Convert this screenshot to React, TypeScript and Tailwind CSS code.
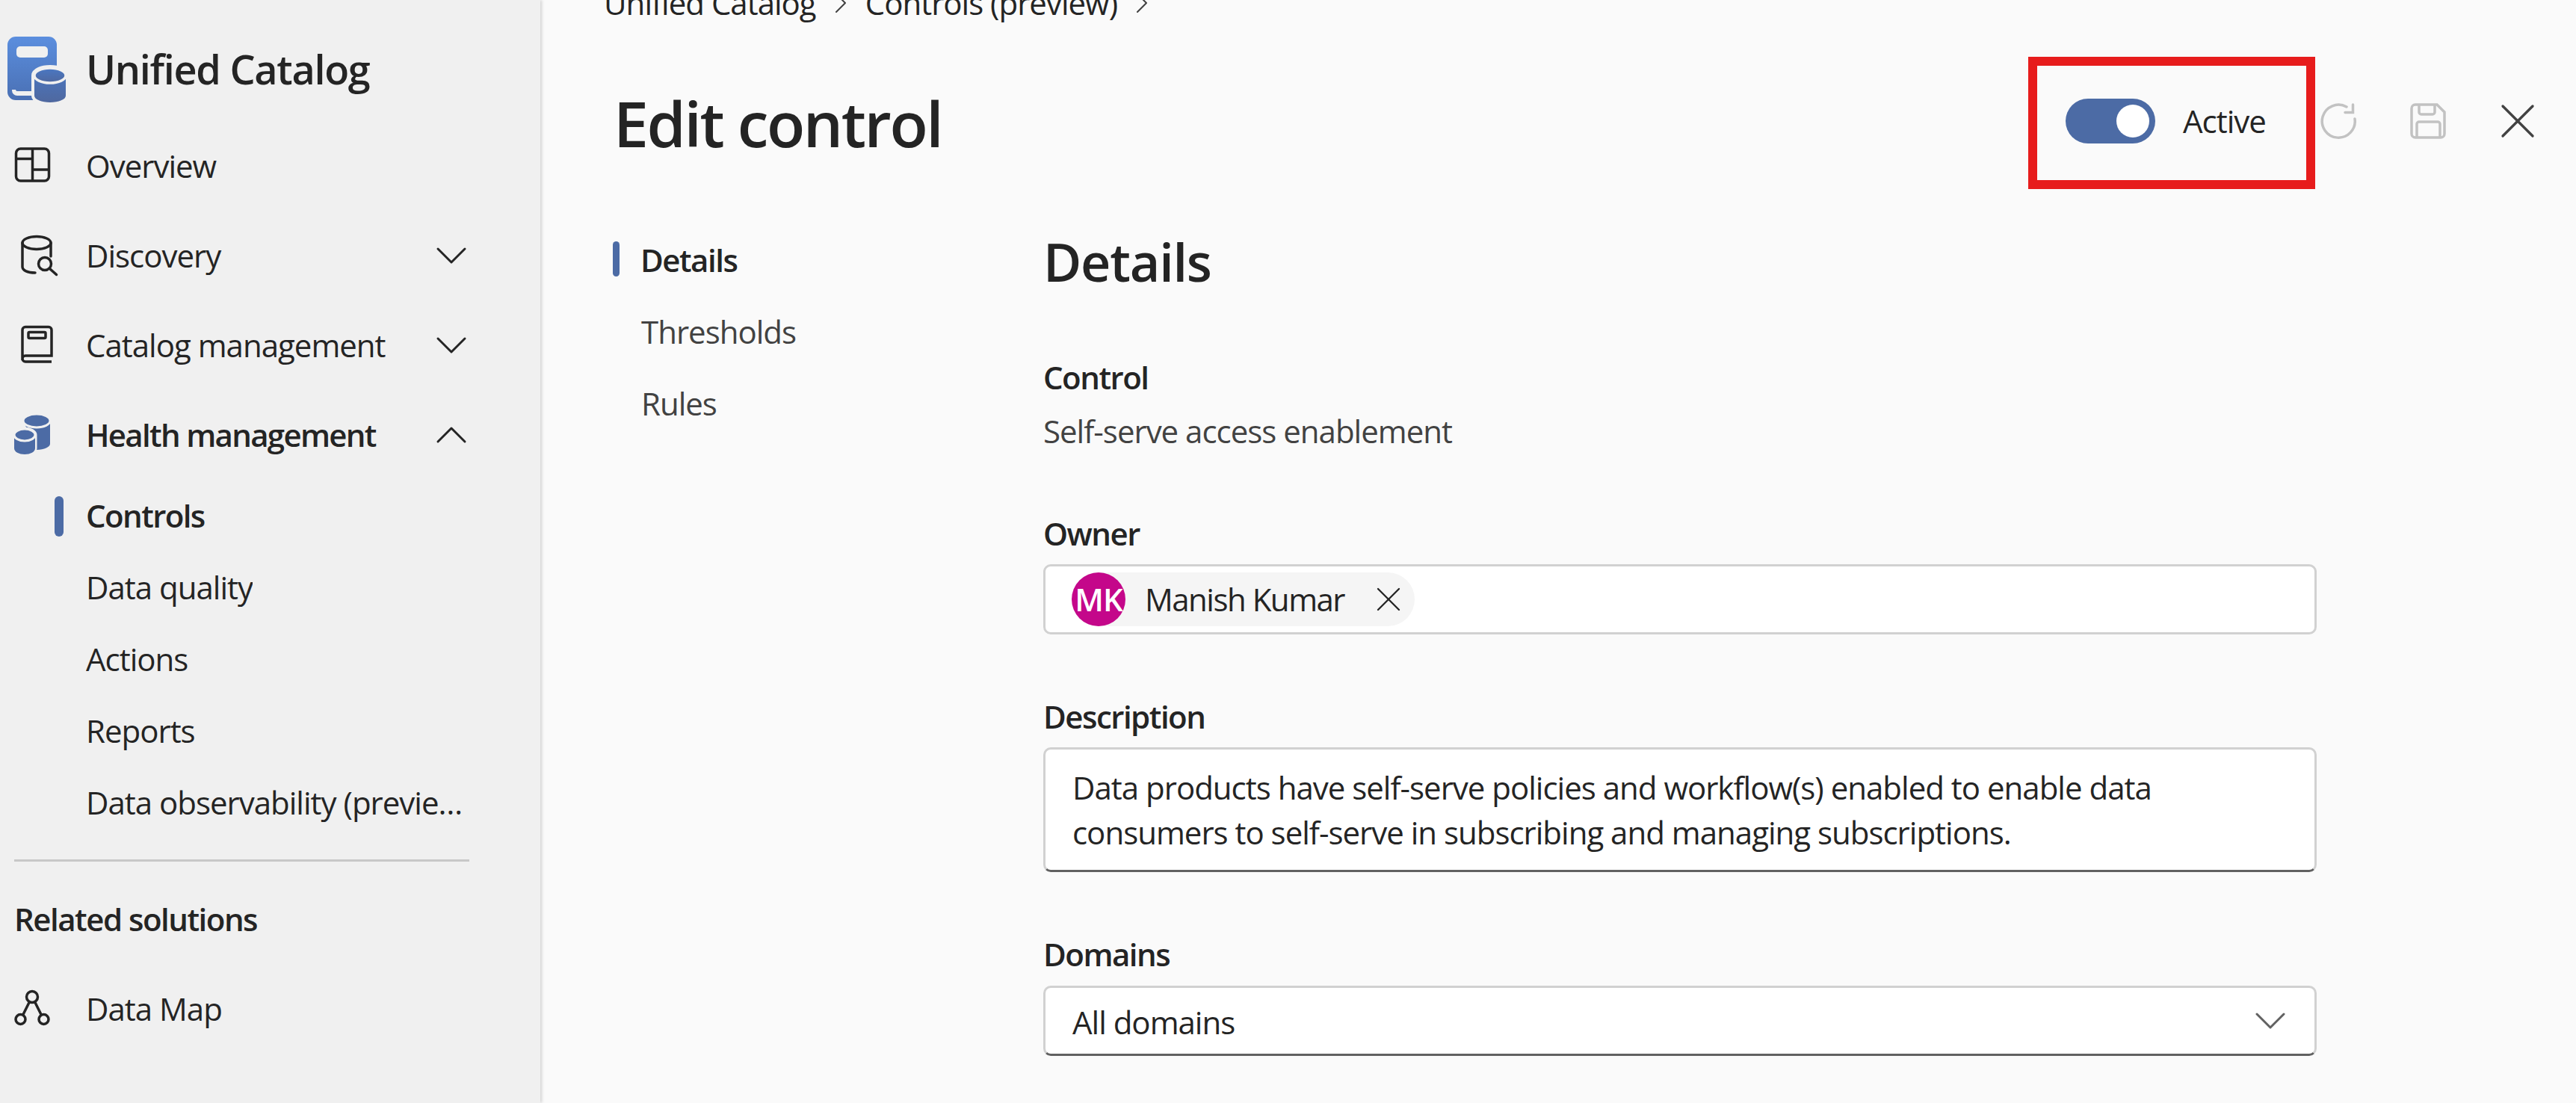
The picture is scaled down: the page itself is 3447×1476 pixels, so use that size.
import { ChevronDown, ChevronUp, ChevronRight, X } from "lucide-react";
import type { ReactNode } from "react";

const FONT = "font-['Open_Sans','Noto_Sans',sans-serif]";

function OverviewIcon() {
  return (
    <svg width="60" height="60" viewBox="0 0 60 60" fill="none" stroke="#242424" strokeWidth="3.5">
      <rect x="2.5" y="7" width="44" height="43" rx="6" />
      <path d="M24.5 7v43M2.5 20.5h22M24.5 35h22" />
    </svg>
  );
}

function DiscoveryIcon() {
  return (
    <svg width="60" height="60" viewBox="0 0 60 60" fill="none" stroke="#242424" strokeWidth="3.5" strokeLinecap="round">
      <ellipse cx="30" cy="13" rx="19" ry="8.5" />
      <path d="M11 13v32c0 5 7 8 17 8M49 13v18" />
      <circle cx="41" cy="41" r="8.5" />
      <path d="M47.5 47.5l9 8" />
    </svg>
  );
}

function CatalogIcon() {
  return (
    <svg width="60" height="60" viewBox="0 0 60 60" fill="none" stroke="#242424" strokeWidth="3.5">
      <path d="M11 50V9.5a4 4 0 0 1 4-4h31a4 4 0 0 1 4 4V44H15a4 4 0 0 0-4 4a4 4 0 0 0 4 4h35" />
      <rect x="19" y="12.5" width="23" height="8" rx="1.5" />
    </svg>
  );
}

function HealthIcon() {
  return (
    <svg width="60" height="60" viewBox="0 0 60 60" fill="#4c6ba5">
      {/* big can */}
      <path d="M12 11h36v31c0 4-8 8-18 8z" />
      <ellipse cx="30" cy="11" rx="18" ry="9" stroke="#f0f0f0" strokeWidth="3" />
      {/* small can */}
      <path d="M0 30a14 8 0 0 1 28 0v18a14 8 0 0 1-28 0z" stroke="#f0f0f0" strokeWidth="5" paintOrder="stroke" />
      <ellipse cx="14" cy="30" rx="14" ry="8" stroke="#f0f0f0" strokeWidth="3" />
    </svg>
  );
}

function DataMapIcon() {
  return (
    <svg width="60" height="60" viewBox="0 0 60 60" fill="none" stroke="#242424" strokeWidth="3.5">
      <circle cx="24" cy="14" r="7.500" />
      <circle cx="8.500" cy="44" r="6.500" />
      <circle cx="39.500" cy="44" r="6.500" />
      <path d="M20.500 20.500L11.500 38.500M27.500 20.500L36.500 38.500" />
    </svg>
  );
}

function Logo() {
  return (
    <svg width="90" height="90" viewBox="0 0 90 90">
      <defs>
        <linearGradient id="book" x1="0" y1="0" x2="0" y2="1">
          <stop offset="0" stopColor="#5b8ede" />
          <stop offset="1" stopColor="#4a70b4" />
        </linearGradient>
        <linearGradient id="can" x1="0" y1="0" x2="0" y2="1">
          <stop offset="0" stopColor="#4a78c4" />
          <stop offset="1" stopColor="#4f689f" />
        </linearGradient>
      </defs>
      <rect x="1" y="1" width="66" height="85" rx="11" fill="url(#book)" />
      <rect x="13" y="14" width="42" height="15" rx="5" fill="#f0f0f0" />
      <path d="M7 72v1a7 7 0 0 0 7 7h24v-6H14a2 2 0 0 1-2-2z" fill="#f0f0f0" />
      <path d="M37 53a21 10 0 0 1 42 0v27a21 9 0 0 1-42 0z" fill="url(#can)" stroke="#f0f0f0" strokeWidth="8" paintOrder="stroke" />
      <ellipse cx="58" cy="53" rx="21" ry="10" fill="url(#can)" stroke="#f0f0f0" strokeWidth="3.500" />
    </svg>
  );
}

function NavRow({ icon, label, bold, open }: { icon: ReactNode; label: string; bold?: boolean; open?: boolean }) {
  return (
    <div className="flex h-[120px] items-center">
      <div className="w-[115px] shrink-0 pl-[19px]">{icon}</div>
      <span className={`flex-1 ${bold ? "font-semibold tracking-[-1.7px]" : ""}`}>{label}</span>
      {open === false && <ChevronDown size={72} strokeWidth={1} className="mr-[83px]" />}
      {open === true && <ChevronUp size={72} strokeWidth={1} className="mr-[83px]" />}
    </div>
  );
}

function SubRow({ label, active }: { label: string; active?: boolean }) {
  return (
    <div className="relative flex h-[96px] items-center pl-[115px] pr-[100px]">
      {active && <span className="absolute left-[73px] top-[22px] h-[54px] w-[12px] rounded-full bg-[#4c6ba5]" />}
      <span className={`truncate ${active ? "font-semibold tracking-[-1.6px]" : ""}`}>{label}</span>
    </div>
  );
}

function Sidebar() {
  return (
    <aside className="relative z-10 h-full w-[723px] shrink-0 bg-[#f0f0f0] text-[#242424] shadow-[2px_0_4px_rgba(0,0,0,0.16)]">
      <div className="mt-[24px] flex h-[138px] items-center">
        <div className="w-[115px] shrink-0 pl-[9px]">
          <Logo />
        </div>
        <span className="-mt-[3px] text-[54px] font-semibold tracking-[-1.3px]">Unified Catalog</span>
      </div>
      <NavRow icon={<OverviewIcon />} label="Overview" />
      <NavRow icon={<DiscoveryIcon />} label="Discovery" open={false} />
      <NavRow icon={<CatalogIcon />} label="Catalog management" open={false} />
      <NavRow icon={<HealthIcon />} label="Health management" bold open />
      <SubRow label="Controls" active />
      <SubRow label="Data quality" />
      <SubRow label="Actions" />
      <SubRow label="Reports" />
      <SubRow label="Data observability (preview)" />
      <div className="ml-[19px] mt-[28px] h-[3px] w-[609px] bg-[#c8c8c8]" />
      <div className="mt-[17px] flex h-[120px] items-center pl-[19px] font-semibold tracking-[-1.5px]">Related solutions</div>
      <NavRow icon={<DataMapIcon />} label="Data Map" />
    </aside>
  );
}

function Toolbar() {
  return (
    <div className="flex items-center">
      <div className="flex h-[177px] w-[384px] items-center border-[12px] border-[#e71c1c] pb-[6px] pl-[38px]">
        <div className="flex h-[60px] w-[120px] items-center justify-end rounded-full bg-[#4c6ba5] pr-[8px]">
          <span className="h-[44px] w-[44px] rounded-full bg-white" />
        </div>
        <span className="ml-[37px]">Active</span>
      </div>
      <div className="flex items-center pb-[6px]">
        <svg className="ml-[7px]" width="48" height="48" viewBox="0 0 48 48" fill="none" stroke="#c2c2c2" strokeWidth="3.5" strokeLinecap="round">
          <path d="M35 5A22 22 0 1 0 46 21M33 12.500h10.500V2" />
        </svg>
        <svg className="ml-[72px]" width="48" height="48" viewBox="0 0 48 48" fill="none" stroke="#c2c2c2" strokeWidth="3.500">
          <path d="M2 7a5 5 0 0 1 5-5h29l10 10v29a5 5 0 0 1-5 5H7a5 5 0 0 1-5-5z" />
          <path d="M12 2v10a3 3 0 0 0 3 3h15a3 3 0 0 0 3-3V2M9 46V28a3 3 0 0 1 3-3h25a3 3 0 0 1 3 3v18" />
        </svg>
        <X size={80} strokeWidth={1} className="ml-[56px] text-[#424242]" />
      </div>
    </div>
  );
}

function Tabs() {
  return (
    <div className="mt-[47px] w-[576px] shrink-0">
      <div className="relative flex h-[96px] items-center pl-[37px] font-semibold tracking-[-1.5px]">
        <span className="absolute left-0 top-[23px] h-[47px] w-[9px] rounded-full bg-[#4c6ba5]" />
        Details
      </div>
      <div className="flex h-[96px] items-center pl-[38px] text-[#424242]">Thresholds</div>
      <div className="flex h-[96px] items-center pl-[38px] text-[#424242]">Rules</div>
    </div>
  );
}

function Form() {
  return (
    <div className="w-[1704px] shrink-0">
      <h2 className="mt-[55px] h-[84px] text-[70px] font-semibold leading-[84px] tracking-[-1.200px]">Details</h2>
      <div className="mt-[83px] h-[60px] font-semibold tracking-[-1.5px]">Control</div>
      <div className="mt-[12px] h-[60px] text-[#424242]">Self-serve access enablement</div>

      <div className="mt-[77px] h-[60px] font-semibold tracking-[-1.5px]">Owner</div>
      <div className="mt-[11px] flex h-[94px] items-center rounded-[10px] border-[3px] border-[#d1d1d1] bg-white pl-[35px]">
        <div className="flex h-[72px] w-[459px] items-center rounded-full bg-[#f5f5f5]">
          <span className="flex h-[72px] w-[72px] shrink-0 items-center justify-center rounded-full bg-[#c4078a] font-semibold text-white">MK</span>
          <span className="ml-[26px] flex-1 tracking-[-1.5px]">Manish Kumar</span>
          <X size={56} strokeWidth={1} className="mr-[7px]" />
        </div>
      </div>

      <div className="mt-[80px] h-[60px] font-semibold tracking-[-1.5px]">Description</div>
      <div className="mt-[11px] h-[167px] rounded-[10px] border-[3px] border-[#d1d1d1] border-b-[#616161] bg-white pl-[36px] pt-[21px]">
        Data products have self-serve policies and workflow(s) enabled to enable data
        <br />
        consumers to self-serve in subscribing and managing subscriptions.
      </div>

      <div className="mt-[80px] h-[60px] font-semibold tracking-[-1.5px]">Domains</div>
      <div className="mt-[12px] flex h-[94px] items-center justify-between rounded-[10px] border-[3px] border-[#d1d1d1] border-b-[#616161] bg-white pl-[36px] pr-[23px]">
        <span className="pt-[4px]">All domains</span>
        <ChevronDown size={72} strokeWidth={1} className="text-[#616161]" />
      </div>
    </div>
  );
}

export default function App() {
  return (
    <div className={`flex h-[1476px] w-[3447px] overflow-hidden bg-[#fafafa] text-[42px] leading-[60px] tracking-[-1px] text-[#242424] ${FONT}`}>
      <Sidebar />
      <main className="flex-1 pl-[87px]">
        <div className="-mt-[44px] mb-[24px] flex h-[96px] items-center">
          <span className="-ml-[2px]">Unified Catalog</span>
          <ChevronRight size={48} strokeWidth={1} className="mx-[9px] text-[#424242]" />
          <span>Controls (preview)</span>
          <ChevronRight size={48} strokeWidth={1} className="mx-[9px] text-[#424242]" />
        </div>
        <div className="flex h-[177px] items-center justify-between pr-[38px]">
          <h1 className="pl-[11px] text-[84px] font-semibold tracking-[-2.4px]">Edit control</h1>
          <Toolbar />
        </div>
        <div className="flex pl-[10px]">
          <Tabs />
          <Form />
        </div>
      </main>
    </div>
  );
}
